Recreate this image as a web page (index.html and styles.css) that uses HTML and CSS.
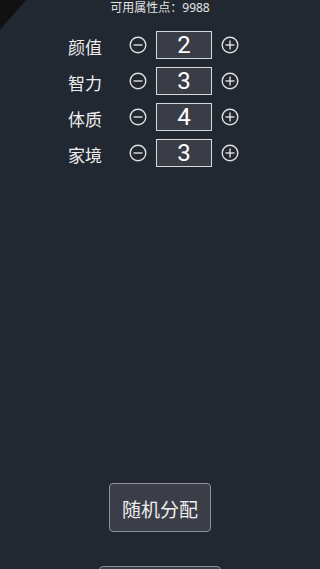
FILE: index.html
```html
<!DOCTYPE html>
<html lang="zh">
<head>
  <meta charset="UTF-8">
  <meta name="viewport" content="width=device-width, initial-scale=1.0">
  <title>属性分配</title>
  <link rel="stylesheet" href="styles.css">
</head>
<body>
  <div class="corner"></div>

  <main class="page">
    <p class="points">可用属性点：9988</p>

    <section class="attrs">
      <div class="row">
        <span class="label">颜值</span>
        <button class="icon-btn" aria-label="减少">
          <svg width="18" height="18" viewBox="0 0 18 18"><circle cx="9" cy="9" r="7.8"/><line x1="4.5" y1="9" x2="13.5" y2="9"/></svg>
        </button>
        <span class="value">2</span>
        <button class="icon-btn" aria-label="增加">
          <svg width="18" height="18" viewBox="0 0 18 18"><circle cx="9" cy="9" r="7.8"/><line x1="4.5" y1="9" x2="13.5" y2="9"/><line x1="9" y1="4.5" x2="9" y2="13.5"/></svg>
        </button>
      </div>
      <div class="row">
        <span class="label">智力</span>
        <button class="icon-btn" aria-label="减少">
          <svg width="18" height="18" viewBox="0 0 18 18"><circle cx="9" cy="9" r="7.8"/><line x1="4.5" y1="9" x2="13.5" y2="9"/></svg>
        </button>
        <span class="value">3</span>
        <button class="icon-btn" aria-label="增加">
          <svg width="18" height="18" viewBox="0 0 18 18"><circle cx="9" cy="9" r="7.8"/><line x1="4.5" y1="9" x2="13.5" y2="9"/><line x1="9" y1="4.5" x2="9" y2="13.5"/></svg>
        </button>
      </div>
      <div class="row">
        <span class="label">体质</span>
        <button class="icon-btn" aria-label="减少">
          <svg width="18" height="18" viewBox="0 0 18 18"><circle cx="9" cy="9" r="7.8"/><line x1="4.5" y1="9" x2="13.5" y2="9"/></svg>
        </button>
        <span class="value">4</span>
        <button class="icon-btn" aria-label="增加">
          <svg width="18" height="18" viewBox="0 0 18 18"><circle cx="9" cy="9" r="7.8"/><line x1="4.5" y1="9" x2="13.5" y2="9"/><line x1="9" y1="4.5" x2="9" y2="13.5"/></svg>
        </button>
      </div>
      <div class="row">
        <span class="label">家境</span>
        <button class="icon-btn" aria-label="减少">
          <svg width="18" height="18" viewBox="0 0 18 18"><circle cx="9" cy="9" r="7.8"/><line x1="4.5" y1="9" x2="13.5" y2="9"/></svg>
        </button>
        <span class="value">3</span>
        <button class="icon-btn" aria-label="增加">
          <svg width="18" height="18" viewBox="0 0 18 18"><circle cx="9" cy="9" r="7.8"/><line x1="4.5" y1="9" x2="13.5" y2="9"/><line x1="9" y1="4.5" x2="9" y2="13.5"/></svg>
        </button>
      </div>
    </section>

    <button class="btn random">随机分配</button>
    <button class="btn next" aria-label="开始新人生"></button>
  </main>
</body>
</html>
```

FILE: styles.css
```css
html, body {
  margin: 0;
  height: 100%;
  overflow: hidden;
}
body {
  background-color: #222831;
  color: #eee;
  font-family: "Noto Sans", "Noto Sans CJK SC", sans-serif;
}
/* dark fold in the top-left corner */
.corner {
  position: absolute;
  top: 0;
  left: 0;
  width: 0;
  height: 0;
  border-top: 30px solid #111;
  border-right: 26px solid transparent;
}
.page {
  display: flex;
  flex-direction: column;
  align-items: center;
}
.points {
  margin: 0;
  font-size: 12px;
  line-height: 15px;
  color: #e4e4e4;
}
.attrs {
  align-self: flex-start;
  margin: 12px 0 0 68px;
  display: flex;
  flex-direction: column;
}
.row {
  display: flex;
  align-items: center;
  height: 36px;
}
.label {
  width: 34px;
  font-size: 17px;
  font-family: "Noto Sans CJK SC", sans-serif;
  margin-right: 27px;
  margin-top: 3px;
}
.icon-btn {
  width: 18px;
  height: 18px;
  padding: 0;
  border: none;
  background: none;
  display: flex;
}
.icon-btn svg {
  fill: none;
  stroke: #e0e0e0;
  stroke-width: 1.4;
}
.value {
  width: 54px;
  height: 26px;
  margin: 0 9px;
  border: 1px solid #d8d8d8;
  background-color: #3a3d46;
  color: #fff;
  font-family: Roboto, "Noto Sans", sans-serif;
  font-size: 24px;
  line-height: 26px;
  text-align: center;
}
.btn {
  background-color: #3b3e48;
  border: 1px solid #8d9099;
  border-radius: 4px;
  color: #eee;
  font-family: "Noto Sans CJK SC", sans-serif;
  font-size: 19px;
  padding: 0;
  flex-shrink: 0;
}
.random {
  margin-top: 312px;
  width: 102px;
  height: 49px;
  padding-top: 2px;
}
.next {
  margin-top: 34px;
  width: 122px;
  height: 49px;
}
```
